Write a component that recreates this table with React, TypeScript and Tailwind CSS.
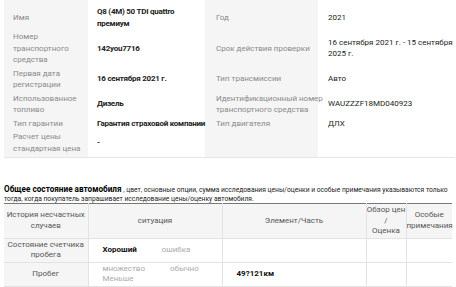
import React from "react";

const font = { fontFamily: 'Roboto, "Liberation Sans", sans-serif' };

type Row = { l1: string[]; v1: string[]; l2: string[]; v2: string[]; cls: string };

const rows: Row[] = [
  { l1: ["Имя"], v1: ["Q8 (4M) 50 TDI quattro", "премиум"], l2: ["Год"], v2: ["2021"], cls: "pt-[6px] pb-[1px]" },
  { l1: ["Номер", "транспортного", "средства"], v1: ["142you7716"], l2: ["Срок действия проверки"], v2: ["16 сентября 2021 г. - 15 сентября", "2025 г."], cls: "py-[1px]" },
  { l1: ["Первая дата", "регистрации"], v1: ["16 сентября 2021 г."], l2: ["Тип трансмиссии"], v2: ["Авто"], cls: "py-[1px]" },
  { l1: ["Использованное", "топливо"], v1: ["Дизель"], l2: ["Идентификационный номер", "транспортного средства"], v2: ["WAUZZZF18MD040923"], cls: "py-[1px]" },
  { l1: ["Тип гарантии"], v1: ["Гарантия страховой компании"], l2: ["Тип двигателя"], v2: ["ДЛХ"], cls: "py-[1px]" },
  { l1: ["Расчет цены", "стандартная цена"], v1: ["-"], l2: [], v2: [], cls: "pt-[1px] pb-[3px]" },
];

function Lines({ items }: { items: string[] }) {
  return (
    <>
      {items.map((t, i) => (
        <div key={i} className="whitespace-nowrap">{t}</div>
      ))}
    </>
  );
}

const cellB = "border-b border-r border-[#e3e3e3]";
const cellL = "border-b border-[#e3e3e3]";

export default function App() {
  return (
    <div className="w-[456px] h-[287px] overflow-hidden bg-white text-[#222]" style={font}>
      <div className="pl-[4px] pr-[1px]">
        <table className="w-full table-fixed border-collapse border-b border-[#e6e6e6] text-[8px] leading-[11.5px]">
          <colgroup>
            <col className="w-[84px]" />
            <col className="w-[117px]" />
            <col className="w-[113px]" />
            <col />
          </colgroup>
          <tbody>
            {rows.map((r, i) => (
              <tr key={i}>
                <td className={`bg-[#f5f5f5] pl-[9px] align-middle text-[#8a8a8a] ${r.cls}`}>
                  <Lines items={r.l1} />
                </td>
                <td className={`pl-[9px] align-middle font-bold tracking-[-0.25px] text-[#222] ${r.cls}`}>
                  <Lines items={r.v1} />
                </td>
                <td className={`bg-[#f5f5f5] pl-[11px] align-middle text-[#8a8a8a] ${r.cls}`}>
                  <Lines items={r.l2} />
                </td>
                <td className={`pl-[10px] align-middle font-normal text-[#222] ${r.cls}`}>
                  <Lines items={r.v2} />
                </td>
              </tr>
            ))}
          </tbody>
        </table>
      </div>

      <div className="mt-[27px] pl-[4px] pr-[3px] text-[6.7px] leading-[9px] text-[#222]">
        <span className="text-[8.2px] font-bold leading-[9px] text-black">Общее состояние автомобиля</span>
        <span> , цвет, основные опции, сумма исследования цены/оценки и особые примечания указываются только тогда, когда покупатель запрашивает исследование цены/оценку автомобиля.</span>
      </div>

      <div className="-mt-[1px] pl-[4px] pr-[4px]">
        <table className="w-full table-fixed border-collapse border-t border-[#777] text-[8px] leading-[10.5px]">
          <colgroup>
            <col className="w-[84px]" />
            <col className="w-[134px]" />
            <col className="w-[144px]" />
            <col className="w-[40px]" />
            <col />
          </colgroup>
          <thead>
            <tr className="bg-[#f5f5f5] text-[#555]">
              <th className={`${cellB} py-[1px] text-center font-normal`}>
                <div>История несчастных</div>
                <div>случаев</div>
              </th>
              <th className={`${cellB} py-[1px] text-center font-normal`}>ситуация</th>
              <th className={`${cellB} py-[1px] text-center font-normal`}>Элемент/Часть</th>
              <th className={`${cellB} py-[1px] text-center font-normal`}>
                <div className="whitespace-nowrap">Обзор цен</div>
                <div>/</div>
                <div>Оценка</div>
              </th>
              <th className={`${cellL} py-[1px] text-center font-normal`}>
                <div className="whitespace-nowrap">Особые</div>
                <div className="whitespace-nowrap">примечания</div>
              </th>
            </tr>
          </thead>
          <tbody>
            <tr className="h-[23px]">
              <td className={`${cellB} bg-[#f5f5f5] py-[1px] text-center text-[#555]`}>
                <div>Состояние счетчика</div>
                <div>пробега</div>
              </td>
              <td className={`${cellB} py-[1px] pl-[14px]`}>
                <div className="flex flex-wrap gap-x-[25px]">
                  <span className="font-bold text-[#111]">Хороший</span>
                  <span className="text-[#aaa]">ошибка</span>
                </div>
              </td>
              <td className={`${cellB} py-[1px] pl-[14px]`}></td>
              <td className={`${cellB} py-[1px]`}></td>
              <td className={`${cellL} py-[1px]`}></td>
            </tr>
            <tr className="h-[23px]">
              <td className={`${cellB} bg-[#f5f5f5] py-[1px] text-center text-[#555]`}>Пробег</td>
              <td className={`${cellB} py-[1px] pl-[14px]`}>
                <div className="flex flex-wrap gap-x-[25px]">
                  <span className="text-[#aaa]">множество</span>
                  <span className="text-[#aaa]">обычно</span>
                  <span className="text-[#aaa]">Меньше</span>
                </div>
              </td>
              <td className={`${cellB} py-[1px] pl-[14px] font-bold text-[#111]`}>49?121км</td>
              <td className={`${cellB} py-[1px]`}></td>
              <td className={`${cellL} py-[1px]`}></td>
            </tr>
            <tr className="h-[23px]">
              <td className={`${cellB} bg-[#f5f5f5] py-[1px] text-center align-top text-[#555]`}>Обслуживание</td>
              <td className={`${cellB} py-[1px]`}></td>
              <td className={`${cellB} py-[1px]`}></td>
              <td className={`${cellB} py-[1px]`}></td>
              <td className={`${cellL} py-[1px]`}></td>
            </tr>
          </tbody>
        </table>
      </div>
    </div>
  );
}
